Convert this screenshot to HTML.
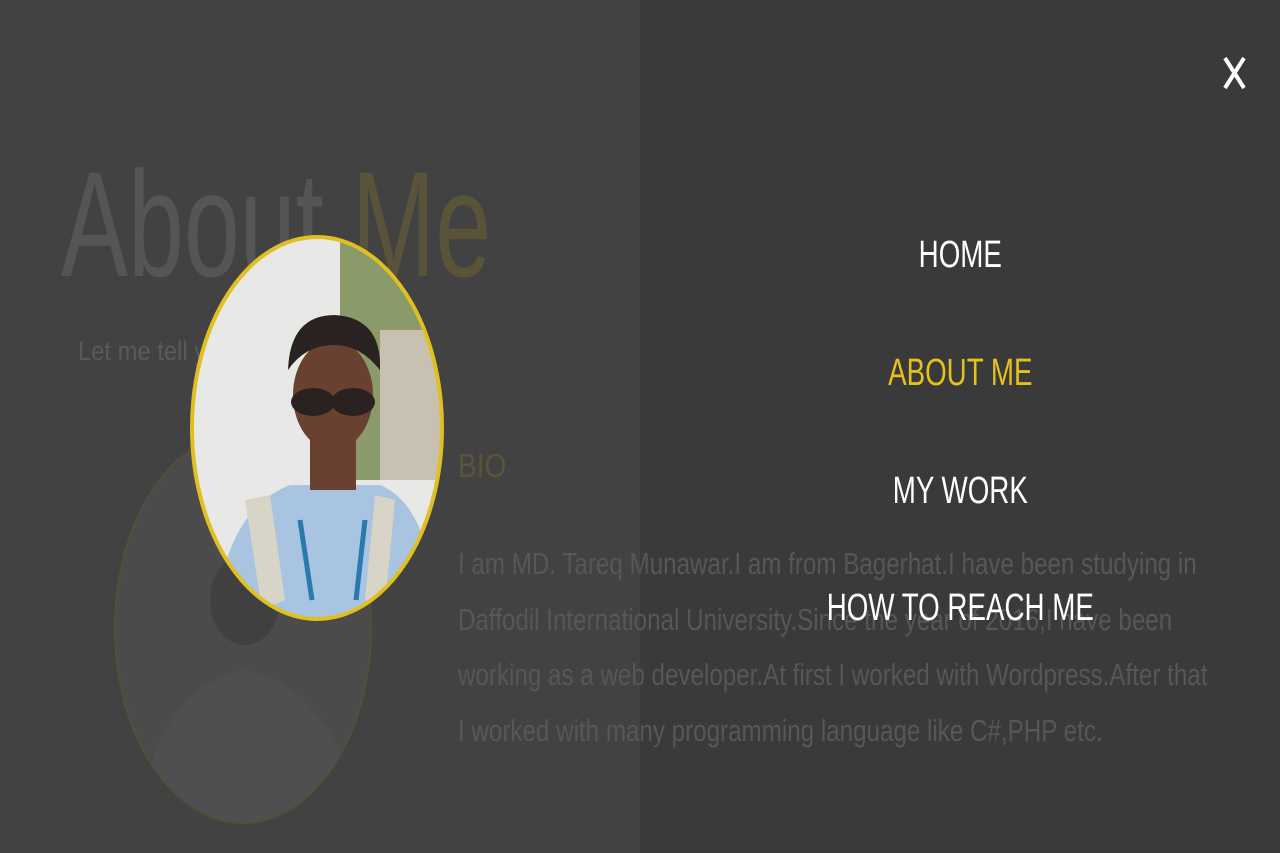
<!DOCTYPE html>
<html><head><style>
body{margin:0;width:1280px;height:853px;overflow:hidden;background:#424242;font-family:"Liberation Sans",sans-serif;position:relative}
.r{position:absolute;left:640px;top:0;width:640px;height:853px;background:#3a3a3a}
.t{position:absolute;white-space:nowrap;transform-origin:0 0}
.nav{position:absolute;left:640px;width:640px;text-align:center;color:#fff;font-size:38px;transform:scaleX(.73);transform-origin:321px 0}
</style></head><body>
<div class="r"></div>
<div class="t" style="left:61px;top:138px;font-size:150px;color:#555;transform:scaleX(.67)">About <span style="color:#59533a">Me</span></div>
<div class="t" style="left:78px;top:336px;font-size:27px;color:#5a5a5a;transform:scaleX(.88)">Let me tell you a few things.</div>
<div class="t" style="left:458px;top:447px;font-size:33px;color:#5b5537;transform:scaleX(.85)">BIO</div>
<div class="t" style="left:458px;top:536px;font-size:31px;line-height:55.5px;color:#575757;transform:scaleX(.78)">I am MD. Tareq Munawar.I am from Bagerhat.I have been studying in<br>Daffodil International University.Since the year of 2016,I have been<br>working as a web developer.At first I worked with Wordpress.After that<br>I worked with many programming language like C#,PHP etc.</div>
<svg width="1280" height="853" style="position:absolute;left:0;top:0">
<defs><clipPath id="c"><ellipse cx="317" cy="428" rx="125" ry="191"/></clipPath>
<clipPath id="c2"><ellipse cx="243" cy="628" rx="128" ry="195"/></clipPath></defs>
<g clip-path="url(#c2)" opacity=".12">
<rect x="110" y="430" width="270" height="400" fill="#888"/>
<ellipse cx="245" cy="600" rx="35" ry="45" fill="#333"/>
<path d="M140 830 Q150 690 245 670 Q340 690 360 830Z" fill="#9ab"/>
</g>
<ellipse cx="243" cy="628" rx="128" ry="195" fill="none" stroke="#534f38" stroke-width="2"/>
<g clip-path="url(#c)">
<rect x="190" y="230" width="260" height="400" fill="#e8e8e6"/>
<rect x="340" y="230" width="110" height="250" fill="#8a9a6a"/>
<rect x="380" y="330" width="70" height="150" fill="#c8c0b0"/>
<path d="M215 621 Q225 510 290 485 L380 485 Q430 505 440 621Z" fill="#a8c4e0"/>
<path d="M245 500 L270 495 L285 600 L262 610Z" fill="#d8d4c8"/>
<path d="M395 500 L375 495 L365 600 L385 605Z" fill="#d8d4c8"/>
<ellipse cx="333" cy="395" rx="40" ry="55" fill="#6a4030"/>
<path d="M288 370 Q290 315 335 315 Q382 318 380 370 Q360 345 335 345 Q305 345 288 370Z" fill="#2a2220"/>
<rect x="310" y="440" width="46" height="50" fill="#6a4030"/>
<ellipse cx="313" cy="402" rx="22" ry="14" fill="#2a2220"/>
<ellipse cx="353" cy="402" rx="22" ry="14" fill="#2a2220"/>
<path d="M300 520 L312 600 M365 520 L356 600" stroke="#2a7ab0" stroke-width="5"/>
</g>
<ellipse cx="317" cy="428" rx="125" ry="191" fill="none" stroke="#e0c020" stroke-width="4"/>
<path d="M1225 58 L1244 88 M1244 58 L1225 88" stroke="#fff" stroke-width="4"/>
</svg>
<div class="nav" style="top:234px">HOME</div>
<div class="nav" style="top:352px;color:#e3c21e">ABOUT ME</div>
<div class="nav" style="top:470px">MY WORK</div>
<div class="nav" style="top:587px">HOW TO REACH ME</div>
</body></html>
